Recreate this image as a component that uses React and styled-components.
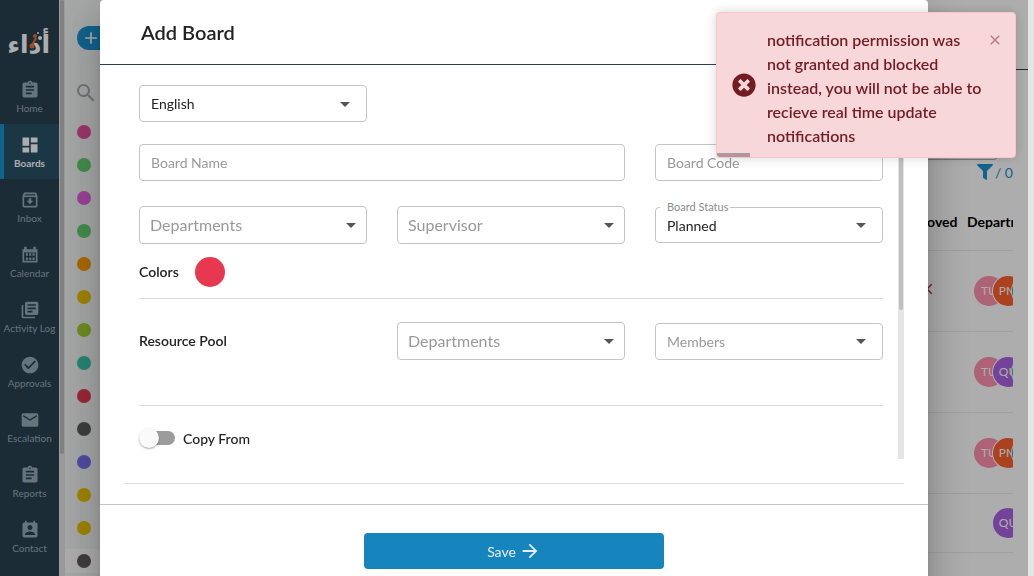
import React from "react";
import styled, { createGlobalStyle, css } from "styled-components";
import {
  MdAssignment,
  MdDashboard,
  MdLibraryBooks,
  MdCheckCircle,
  MdEmail,
  MdPermContactCalendar,
  MdSearch,
  MdArrowDropDown,
  MdArrowForward,
  MdAdd,
  MdClose,
} from "react-icons/md";
import { FaFilter, FaTimesCircle } from "react-icons/fa";

const GlobalStyle = createGlobalStyle`
  *, *::before, *::after { box-sizing: border-box; }
  body {
    margin: 0;
    overflow: hidden;
    background: #fff;
    color: #222;
    font-family: Lato, "Liberation Sans", sans-serif;
    font-size: 14px;
  }
  button, input, select { font: inherit; }
`;

/* ---------- page behind the dialog ---------- */

const Page = styled.div`
  display: flex;
  height: 100vh;
  overflow: hidden;
`;

const Sidebar = styled.nav`
  flex: 0 0 59px;
  min-width: 0;
  background: #294251;
  color: #97acb8;
`;

const Logo = styled.div`
  height: 69px;
  padding: 20px 8px 0;
  svg { display: block; }
`;

const NavLink = styled.a`
  display: flex;
  flex-direction: column;
  align-items: center;
  height: 55px;
  padding-top: 11px;
  gap: 1px;
  font-size: 10px;
  line-height: 14px;
  white-space: nowrap;
  color: inherit;
  text-decoration: none;
  svg { flex: none; }
  ${(p) =>
    p.$active &&
    css`
      background: #285268;
      box-shadow: inset 4px 0 #1992cf;
      color: #fff;
      font-weight: 700;
    `}
`;

const Scroll = styled.div`
  flex: 0 0 6px;
  padding: 0 1px;
  background: #e5e5e5;
`;

const Thumb = styled.div`
  height: ${(p) => p.$height};
  border-radius: 3px;
  background: #bfbfbf;
`;

const BoardList = styled.aside`
  flex: 0 0 200px;
  padding-top: 26px;
  background: #f5f7f7;
`;

const AddButton = styled.button`
  display: flex;
  align-items: center;
  width: 110px;
  height: 24px;
  margin: 0 12px 31px;
  padding: 0 4px;
  border: 0;
  border-radius: 12px;
  background: #1992cf;
  color: #fff;
`;

const SearchButton = styled.button`
  display: block;
  height: 24px;
  margin: 0 9px 15px;
  padding: 0;
  border: 0;
  background: none;
  color: #a5abae;
`;

const BoardItem = styled.div`
  display: flex;
  align-items: center;
  height: 24px;
  margin-bottom: 9px;
  padding: 0 12px;
  background: ${(p) => (p.$hover ? "#fff" : "transparent")};
`;

const BoardDot = styled.span`
  width: 14px;
  height: 14px;
  border-radius: 50%;
  background: ${(p) => p.$color};
`;

const Main = styled.main`
  flex: 1;
  min-width: 0;
  background: #fff;
`;

const TopBar = styled.header`
  height: 70px;
  border-bottom: 1px solid #294251;
`;

const Tools = styled.div`
  display: flex;
  flex-direction: column;
  align-items: flex-end;
  height: 124px;
  padding: 50px 15px 0 0;
`;

const FilterBox = styled.div`
  width: 200px;
  height: 40px;
  margin-right: 15px;
  border: 1px solid #b0b0b0;
  border-radius: 4px;
`;

const FilterCount = styled.div`
  display: flex;
  align-items: center;
  gap: 2px;
  height: 24px;
  color: #1992cf;
`;

const Table = styled.table`
  width: calc(100% - 15px);
  table-layout: fixed;
  border-collapse: collapse;
`;

const HeadCell = styled.th`
  width: ${(p) => p.$width || "auto"};
  height: 56px;
  padding: 0;
  border-bottom: 1px solid #ececec;
  color: #000;
  font-size: 14px;
  font-weight: 700;
  text-align: ${(p) => p.$align || "left"};
  white-space: nowrap;
  overflow: hidden;
`;

const Cell = styled.td`
  height: ${(p) => p.$height};
  padding: 0;
  border-bottom: 1px solid #ececec;
  text-align: center;
  overflow: hidden;
  color: #d3202e;
`;

const Avatars = styled.div`
  display: flex;
  padding-left: ${(p) => (p.$single ? "26px" : "7px")};
`;

const Avatar = styled.span`
  flex: 0 0 30px;
  height: 30px;
  border-radius: 50%;
  box-shadow: 0 0 0 1px #fff;
  background: ${(p) => p.$color};
  color: #fff;
  font-size: 12px;
  line-height: 30px;
  text-align: center;
  & + & { margin-left: -11px; }
`;

/* ---------- dialog ---------- */

const Backdrop = styled.div`
  position: fixed;
  inset: 0 6px 0 0;
  padding: 0 100px;
  overflow: hidden;
  background: rgba(0, 0, 0, 0.32);
`;

const Dialog = styled.section`
  min-height: calc(100vh + 24px);
  border-radius: 4px;
  background: #fff;
  box-shadow: 0 11px 15px -7px rgba(0, 0, 0, 0.2),
    0 24px 38px 3px rgba(0, 0, 0, 0.14), 0 9px 46px 8px rgba(0, 0, 0, 0.12);
`;

const DialogHeader = styled.header`
  display: flex;
  align-items: center;
  height: 65px;
  padding: 0 41px 1px;
  border-bottom: 1px solid #294251;
`;

const Title = styled.h2`
  margin: 0;
  font-size: 20px;
  font-weight: 600;
  line-height: 24px;
`;

const DialogBody = styled.div`
  padding: 0 24px 20px;
`;

const ScrollArea = styled.div`
  display: flex;
  height: 394px;
  margin-bottom: 24px;
`;

const Form = styled.form`
  flex: 1;
  min-width: 0;
  padding: 20px 15px 0;
`;

const Row = styled.div`
  display: grid;
  grid-template-columns: repeat(3, 1fr);
  column-gap: 30px;
  align-items: center;
  margin-bottom: ${(p) => p.$after};
`;

const Rule = styled.hr`
  height: 1px;
  margin: 0 0 ${(p) => p.$after || "0"};
  border: 0;
  background: #dedede;
`;

const fieldBox = css`
  width: 100%;
  height: ${(p) => p.$height || "37px"};
  padding: 0 11px;
  border: 1px solid #c4c4c4;
  border-radius: 4px;
  outline: 0;
  background: #fff;
  color: #222;
`;

const TextInput = styled.input`
  ${fieldBox}
  &::placeholder { color: #999; opacity: 1; }
`;

const SelectWrap = styled.div`
  position: relative;
  display: grid;
  align-items: center;
  > * { grid-area: 1 / 1; }
  > svg {
    justify-self: end;
    margin-right: ${(p) => (p.$wide ? "4px" : "10px")};
    color: #555;
    pointer-events: none;
  }
`;

const SelectBox = styled.select`
  ${fieldBox}
  appearance: none;
  ${(p) => p.$muted && "color: #999;"}
  ${(p) => p.$large && "font-size: 16px; padding: 0 10px 2px;"}
`;

const FloatingLabel = styled.label`
  position: absolute;
  top: -7px;
  left: 5px;
  padding: 0 2px 0 7px;
  background: #fff;
  color: #8c8c8c;
  font-size: 11px;
  line-height: 14px;
`;

const Span2 = styled.div`
  grid-column: span 2;
  display: flex;
`;

const Label = styled.span`
  font-weight: 600;
  line-height: 20px;
`;

const ColorRow = styled.div`
  display: flex;
  align-items: center;
  gap: 16px;
  margin-bottom: 11px;
`;

const Swatch = styled.button`
  width: 30px;
  height: 30px;
  padding: 0;
  border: 0;
  border-radius: 50%;
  background: #e8384f;
`;

const SwitchLabel = styled.label`
  display: flex;
  align-items: center;
  gap: 8px;
  height: 20px;
  font-weight: 500;
`;

const Switch = styled.input`
  appearance: none;
  display: flex;
  align-items: center;
  width: 34px;
  height: 14px;
  margin: 0 0 0 2px;
  border-radius: 7px;
  background: #9c9c9c;
  &::before {
    content: "";
    flex: none;
    width: 20px;
    height: 20px;
    margin-left: -2px;
    border-radius: 50%;
    background: #fafafa;
    box-shadow: 0 1px 2px rgba(0, 0, 0, 0.35);
  }
`;

const DialogFooter = styled.footer`
  display: flex;
  justify-content: center;
  padding: 28px 24px;
  border-top: 1px solid #c4c4c4;
`;

const SaveButton = styled.button`
  display: flex;
  align-items: center;
  justify-content: center;
  gap: 3px;
  width: 300px;
  height: 36px;
  border: 0;
  border-radius: 4px;
  background: #1785bd;
  color: #e8eef2;
`;

/* ---------- toast ---------- */

const Toast = styled.div`
  position: fixed;
  top: 12px;
  right: 18px;
  width: 300px;
  border: 1px solid #f5c6cb;
  border-radius: 4px;
  overflow: hidden;
  background: #f8d7da;
  color: #721c24;
  box-shadow: 0 0 12px rgba(0, 0, 0, 0.16);
`;

const ToastContent = styled.div`
  display: flex;
  align-items: center;
  gap: 11px;
  padding: 15px 13px 5px 15px;
  > svg { flex: none; margin-bottom: 6px; }
`;

const ToastText = styled.p`
  flex: 1;
  margin: 0;
  font-size: 16px;
  font-weight: 600;
  line-height: 24px;
`;

const ToastClose = styled.button`
  display: flex;
  align-self: flex-start;
  margin: 4px -1px 0 -10px;
  padding: 0;
  border: 0;
  background: none;
  color: #b07a80;
`;

const ToastProgress = styled.div`
  width: 33px;
  height: 4px;
  background: #af989b;
`;

const LogoMark = () => (
  <svg width="43" height="36" viewBox="0 0 43 36" aria-label="أداء">
    <text
      x="42"
      y="33"
      direction="rtl"
      fill="#fff"
      fontFamily="DejaVu Sans"
      fontWeight="700"
      fontSize="25"
    >
      أداء
    </text>
    <path d="M23 27 L28 18" stroke="#f06a35" strokeWidth="2" />
    <circle cx="24" cy="26" r="2.500" fill="#f06a35" />
    <circle cx="27" cy="16" r="2" fill="#f06a35" />
    <circle cx="32" cy="18" r="2" fill="#fff" />
    <circle cx="30" cy="13" r="1" fill="#fff" />
  </svg>
);

const InboxIcon = ({ size }) => (
  <svg width={size} height={size} viewBox="0 0 24 24" fill="none" stroke="currentColor" strokeWidth="2">
    <path d="M4 7.5V19a1 1 0 0 0 1 1h14a1 1 0 0 0 1-1V7.5L18.500 4h-13z" />
    <path d="M4 7.500h16" />
    <path d="M10.500 10h3v3H16l-4 4-4-4h2.500z" fill="currentColor" stroke="none" />
  </svg>
);

const CalendarIcon = ({ size }) => (
  <svg width={size} height={size} viewBox="0 0 24 24" fill="currentColor">
    <path
      fillRule="evenodd"
      d="M3 5h2V2h3v3h8V2h3v3h2v16H3zM5 9v10h14V9zM7 10h2.500v3H7zM11 10h2.500v3H11zM15 10h2.500v3H15zM7 15h2.500v3H7zM11 15h2.500v3H11zM15 15h2.500v3H15z"
    />
  </svg>
);

const navItems = [
  ["Home", MdAssignment],
  ["Boards", MdDashboard],
  ["Inbox", InboxIcon],
  ["Calendar", CalendarIcon],
  ["Activity Log", MdLibraryBooks],
  ["Approvals", MdCheckCircle],
  ["Escalation", MdEmail],
  ["Reports", MdAssignment],
  ["Contact", MdPermContactCalendar],
];

const boardColors = [
  "#ea4e9d", "#62d26f", "#e362e3", "#62d26f", "#fd9a00", "#eec300", "#a4cf30",
  "#37c5ab", "#e8384f", "#5c5c5c", "#7a6ff0", "#eec300", "#eec300", "#5c5c5c",
];

const pink = ["TU", "#ff91ae"];
const orange = ["PM", "#fd612c"];
const purple = ["QU", "#aa62e3"];
const tableRows = [
  { approved: false, people: [pink, orange, ["", "#14a0e0"]], height: "81px" },
  { people: [pink, purple, ["", "#3cc84b"]], height: "81px" },
  { people: [pink, orange, ["", "#14a0e0"]], height: "81px" },
  { people: [purple], height: "59px" },
];

function Dropdown({ label, value, large, wide, height }) {
  return (
    <SelectWrap $wide={wide}>
      <SelectBox aria-label={label} $muted={!value} $large={large} $height={height}>
        <option>{value || label}</option>
      </SelectBox>
      <MdArrowDropDown size={24} />
    </SelectWrap>
  );
}

export default function App() {
  return (
    <>
      <GlobalStyle />
      <Page>
        <Sidebar>
          <Logo><LogoMark /></Logo>
          {navItems.map(([name, Icon]) => (
            <NavLink key={name} href="#" $active={name === "Boards"}>
              <Icon size={20} />
              {name}
            </NavLink>
          ))}
        </Sidebar>
        <Scroll><Thumb $height="454px" /></Scroll>
        <BoardList>
          <AddButton aria-label="Add"><MdAdd size={20} /></AddButton>
          <SearchButton aria-label="Search"><MdSearch size={24} /></SearchButton>
          {boardColors.map((color, i) => (
            <BoardItem key={i} $hover={i === boardColors.length - 1}>
              <BoardDot $color={color} />
            </BoardItem>
          ))}
        </BoardList>
        <Main>
          <TopBar />
          <Tools>
            <FilterBox />
            <FilterCount><FaFilter size={16} />/ 0</FilterCount>
          </Tools>
          <Table>
            <thead>
              <tr>
                <HeadCell />
                <HeadCell $width="80px" $align="center">Approved</HeadCell>
                <HeadCell $width="46px">Departments</HeadCell>
              </tr>
            </thead>
            <tbody>
              {tableRows.map((row, i) => (
                <tr key={i}>
                  <Cell $height={row.height} />
                  <Cell>{row.approved === false && <MdClose size={18} />}</Cell>
                  <Cell>
                    <Avatars $single={row.people.length === 1}>
                      {row.people.map(([initials, color], j) => (
                        <Avatar key={j} $color={color}>{initials}</Avatar>
                      ))}
                    </Avatars>
                  </Cell>
                </tr>
              ))}
            </tbody>
          </Table>
        </Main>
        <Scroll />
      </Page>

      <Backdrop>
        <Dialog role="dialog" aria-labelledby="dialog-title">
          <DialogHeader><Title id="dialog-title">Add Board</Title></DialogHeader>
          <DialogBody>
            <ScrollArea>
              <Form>
                <Row $after="22px">
                  <Dropdown label="Language" value="English" />
                </Row>
                <Row $after="25px">
                  <Span2><TextInput aria-label="Board Name" placeholder="Board Name" /></Span2>
                  <TextInput aria-label="Board Code" placeholder="Board Code" />
                </Row>
                <Row $after="13px">
                  <Dropdown label="Departments" large wide height="38px" />
                  <Dropdown label="Supervisor" large wide height="38px" />
                  <SelectWrap>
                    <SelectBox id="status" $height="36px">
                      <option>Planned</option>
                    </SelectBox>
                    <MdArrowDropDown size={24} />
                    <FloatingLabel htmlFor="status">Board Status</FloatingLabel>
                  </SelectWrap>
                </Row>
                <ColorRow>
                  <Label>Colors</Label>
                  <Swatch type="button" aria-label="Board color" />
                </ColorRow>
                <Rule $after="23px" />
                <Row $after="45px">
                  <Label>Resource Pool</Label>
                  <Dropdown label="Departments" large wide height="38px" />
                  <Dropdown label="Members" />
                </Row>
                <Rule $after="22px" />
                <SwitchLabel>
                  <Switch type="checkbox" role="switch" />
                  Copy From
                </SwitchLabel>
              </Form>
              <Scroll><Thumb $height="245px" /></Scroll>
            </ScrollArea>
            <Rule />
          </DialogBody>
          <DialogFooter>
            <SaveButton type="button">Save <MdArrowForward size={22} /></SaveButton>
          </DialogFooter>
        </Dialog>
      </Backdrop>

      <Toast role="alert">
        <ToastContent>
          <FaTimesCircle size={24} />
          <ToastText>
            notification permission was not granted and blocked instead, you will
            not be able to recieve real time update notifications
          </ToastText>
          <ToastClose aria-label="Close"><MdClose size={16} /></ToastClose>
        </ToastContent>
        <ToastProgress />
      </Toast>
    </>
  );
}
